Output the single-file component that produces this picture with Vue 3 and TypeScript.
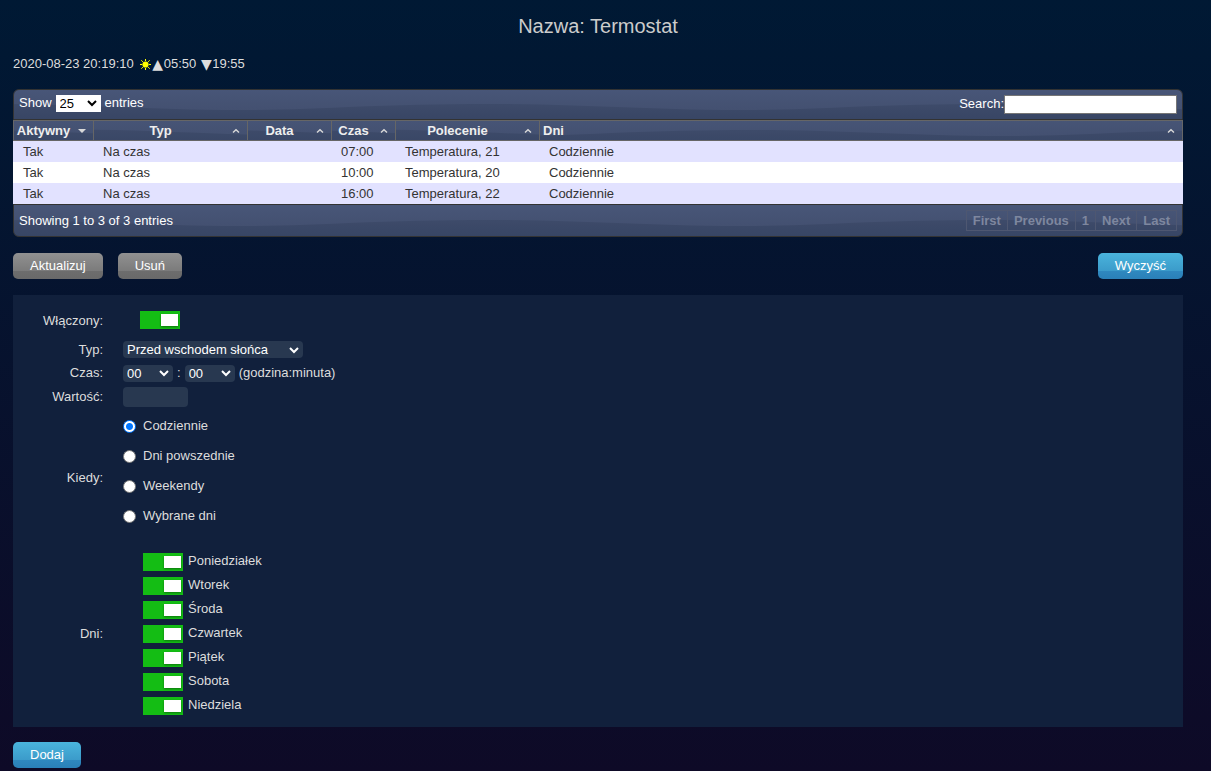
<script setup lang="ts">
import { ref } from 'vue'

interface Timer {
  active: string
  type: string
  date: string
  time: string
  command: string
  days: string
}

const columns = [
  { key: 'active', label: 'Aktywny' },
  { key: 'type', label: 'Typ' },
  { key: 'date', label: 'Data' },
  { key: 'time', label: 'Czas' },
  { key: 'command', label: 'Polecenie' },
  { key: 'days', label: 'Dni' },
]

const timers: Timer[] = [
  { active: 'Tak', type: 'Na czas', date: '', time: '07:00', command: 'Temperatura, 21', days: 'Codziennie' },
  { active: 'Tak', type: 'Na czas', date: '', time: '10:00', command: 'Temperatura, 20', days: 'Codziennie' },
  { active: 'Tak', type: 'Na czas', date: '', time: '16:00', command: 'Temperatura, 22', days: 'Codziennie' },
]

const pages = ['First', 'Previous', '1', 'Next', 'Last']
const repeatModes = ['Codziennie', 'Dni powszednie', 'Weekendy', 'Wybrane dni']
const weekdays = ['Poniedziałek', 'Wtorek', 'Środa', 'Czwartek', 'Piątek', 'Sobota', 'Niedziela']

const pageSize = ref('25')
const search = ref('')
const enabled = ref(true)
const hour = ref('00')
const minute = ref('00')
const value = ref('')
const repeat = ref('Codziennie')
const chosenDays = ref<string[]>([...weekdays])
</script>

<template>
  <main class="page">
    <h1 class="title">Nazwa: Termostat</h1>

    <p class="clock">
      <span>2020-08-23 20:19:10</span>
      <svg class="sun" viewBox="0 0 11 11" aria-hidden="true">
        <circle cx="5.5" cy="5.5" r="3.1" fill="#ff0" />
        <path
          d="M5.5 0v2M5.5 9v2M0 5.5h2M9 5.5h2M1.3 1.3l1.6 1.6M8.1 8.1l1.6 1.6M9.7 1.3L8.1 2.9M2.9 8.1L1.3 9.7"
          stroke="#ff0"
          stroke-width="1"
        />
      </svg>
      <span class="sun-time"><span class="tri">▲</span>05:50</span>
      <span class="sun-time"><span class="tri">▼</span>19:55</span>
    </p>

    <section class="grid-box">
      <div class="bar bar-top wave">
        <label class="length">
          Show
          <select v-model="pageSize" class="size-select">
            <option>10</option>
            <option>25</option>
            <option>50</option>
          </select>
          entries
        </label>
        <label class="filter">Search:<input v-model="search" type="search" class="search" /></label>
      </div>

      <table class="timers">
        <colgroup>
          <col v-for="c in columns" :key="c.key" :class="'w-' + c.key" />
        </colgroup>
        <thead>
          <tr>
            <th v-for="(c, i) in columns" :key="c.key" class="wave" :class="{ last: c.key === 'days' }">
              <div class="head">
                <span class="head-label">{{ c.label }}</span>
                <svg v-if="i === 0" class="sort" viewBox="0 0 8 8" aria-hidden="true">
                  <path d="M0 2h8L4 6z" fill="#d9d9d9" />
                </svg>
                <svg v-else class="sort" viewBox="0 0 8 8" aria-hidden="true">
                  <path d="M1 5.5L4 2.7L7 5.5" fill="none" stroke="#d9d9d9" stroke-width="1.4" />
                </svg>
              </div>
            </th>
          </tr>
        </thead>
        <tbody>
          <tr v-for="t in timers" :key="t.time">
            <td>{{ t.active }}</td>
            <td>{{ t.type }}</td>
            <td>{{ t.date }}</td>
            <td>{{ t.time }}</td>
            <td>{{ t.command }}</td>
            <td>{{ t.days }}</td>
          </tr>
        </tbody>
      </table>

      <div class="bar bar-bottom wave">
        <span>Showing 1 to 3 of 3 entries</span>
        <nav class="pager">
          <button v-for="p in pages" :key="p" type="button" class="page-btn">{{ p }}</button>
        </nav>
      </div>
    </section>

    <div class="actions">
      <button type="button" class="btn gray">Aktualizuj</button>
      <button type="button" class="btn gray">Usuń</button>
      <button type="button" class="btn blue push">Wyczyść</button>
    </div>

    <form class="panel" @submit.prevent>
      <div class="row row-enabled">
        <label class="name" for="enabled">Włączony:</label>
        <div class="field"><input id="enabled" v-model="enabled" type="checkbox" class="toggle" /></div>
      </div>
      <div class="row row-type">
        <label class="name" for="kind">Typ:</label>
        <div class="field">
          <select id="kind" class="dark-select kind">
            <option>Przed wschodem słońca</option>
          </select>
        </div>
      </div>
      <div class="row row-time">
        <label class="name" for="hour">Czas:</label>
        <div class="field time">
          <select id="hour" v-model="hour" class="dark-select short"><option>00</option></select>
          <span>:</span>
          <select v-model="minute" class="dark-select short" aria-label="minuta"><option>00</option></select>
          <span>(godzina:minuta)</span>
        </div>
      </div>
      <div class="row row-value">
        <label class="name" for="value">Wartość:</label>
        <div class="field"><input id="value" v-model="value" type="text" class="value" /></div>
      </div>
      <div class="row row-when">
        <span class="name">Kiedy:</span>
        <div class="field radios">
          <label v-for="m in repeatModes" :key="m" class="radio-line">
            <input v-model="repeat" type="radio" name="repeat" :value="m" class="radio" />
            <span>{{ m }}</span>
          </label>
        </div>
      </div>
      <div class="row row-days">
        <span class="name">Dni:</span>
        <div class="field days">
          <label v-for="d in weekdays" :key="d" class="day-line">
            <input v-model="chosenDays" type="checkbox" :value="d" class="toggle" />
            <span class="caption">{{ d }}</span>
          </label>
        </div>
      </div>
    </form>

    <button type="button" class="btn blue">Dodaj</button>
  </main>
</template>

<style>
html {
  min-height: 100%;
  background: linear-gradient(#001934, #0e0a27);
}
</style>

<style scoped>
.page {
  padding: 12px 28px 3px 13px;
  font: 13px/20px "Liberation Sans", Arial, sans-serif;
  color: #ddd;
}

.page * {
  box-sizing: border-box;
}

input,
select,
button {
  margin: 0;
  font: inherit;
}

.title {
  margin: 0;
  font-size: 20px;
  line-height: 28px;
  font-weight: 400;
  text-align: center;
  color: #ccc;
}

.clock {
  display: flex;
  align-items: center;
  margin: 14px 0 15px;
}

.sun {
  width: 11px;
  height: 11px;
  margin: 0 1px 0 6px;
}

.sun-time {
  display: flex;
  margin-right: 4px;
}

.tri {
  width: 12px;
  font-family: "DejaVu Sans", sans-serif;
  font-size: 14px;
  text-align: center;
}

.wave {
  background-color: #3a4867;
  background-image: url("data:image/svg+xml,%3Csvg xmlns='http://www.w3.org/2000/svg' width='500' height='100'%3E%3Cdefs%3E%3ClinearGradient id='a' x1='0' y1='34' x2='0' y2='56' gradientUnits='userSpaceOnUse'%3E%3Cstop stop-color='%23485678'/%3E%3Cstop offset='1' stop-color='%23435070'/%3E%3C/linearGradient%3E%3ClinearGradient id='b' x1='0' y1='48' x2='0' y2='66' gradientUnits='userSpaceOnUse'%3E%3Cstop stop-color='%233e4b6a'/%3E%3Cstop offset='1' stop-color='%23374564'/%3E%3C/linearGradient%3E%3C/defs%3E%3Cpath fill='url(%23b)' d='M0 0h500v100H0z'/%3E%3Cpath fill='url(%23a)' d='M0 0H500V52C460 54 430 55 392 55C300 55 240 49 142 49C90 49 50 50 0 52z'/%3E%3C/svg%3E");
  background-position: 50% 50%;
}

.bar {
  display: flex;
  justify-content: space-between;
  border: 1px solid #333;
  color: #fff;
}

.bar-top {
  height: 31px;
  padding: 5px;
  border-radius: 6px 6px 0 0;
}

.bar-bottom {
  height: 33px;
  padding: 5px;
  align-items: center;
  border-radius: 0 0 6px 6px;
}

.length {
  display: flex;
  align-items: center;
  gap: 4px;
  height: 16px;
}

.size-select {
  width: 45px;
  height: 17px;
  padding: 0 4px;
  border: 0;
  border-radius: 0;
  appearance: none;
  color: #000;
  background: #fff url("data:image/svg+xml,%3Csvg xmlns='http://www.w3.org/2000/svg' width='10' height='8'%3E%3Cpath d='M1 2l4 4l4-4' fill='none' stroke='%23000' stroke-width='2'/%3E%3C/svg%3E") no-repeat right 4px center;
  line-height: 17px;
}

.filter {
  display: flex;
  align-items: center;
  height: 18px;
}

.search {
  width: 173px;
  height: 19px;
  margin-top: 1px;
  padding: 1px 2px;
  border: 1px solid #767676;
  border-radius: 0;
  background: #fff;
  color: #000;
}

.timers {
  width: 100%;
  table-layout: fixed;
  border-collapse: separate;
  border-spacing: 0;
}

.w-active { width: 81px; }
.w-type { width: 154px; }
.w-date { width: 84px; }
.w-time { width: 64px; }
.w-command { width: 144px; }

th {
  height: 21px;
  padding: 0;
  border: solid #666;
  border-width: 1px 1px 1px 0;
  font-weight: 700;
  color: #eee;
}

th:first-child {
  border-left-width: 1px;
}

.head {
  display: flex;
  align-items: center;
  height: 19px;
  padding-right: 7px;
}

.head-label {
  flex: 1;
  text-align: center;
  margin-right: 5px;
}

.last .head-label {
  padding-left: 3px;
  text-align: left;
}

.sort {
  width: 8px;
  height: 8px;
}

td {
  height: 21px;
  padding: 0 9px;
  line-height: 21px;
  color: #333;
  background: #fff;
}

td:first-child {
  padding-left: 10px;
}

tbody tr:nth-child(odd) td {
  background: #e2e2ff;
}

.pager {
  display: flex;
}

.page-btn {
  height: 21px;
  margin-left: -1px;
  padding: 0 6px;
  border: 1px solid #4e5771;
  background: none;
  font-weight: 700;
  line-height: 19px;
  color: #7e879f;
}

.actions {
  display: flex;
  gap: 15px;
  margin: 16px 0;
}

.push {
  margin-left: auto;
}

.btn {
  height: 26px;
  padding: 0 17px;
  border: 0;
  border-radius: 5px;
  line-height: 26px;
  color: #fff;
}

.gray {
  background: linear-gradient(#919191, #7b7b7b 69%, #6d6d6d 70%, #696969);
}

.blue {
  background: linear-gradient(#4ab4dc, #3b9bca 69%, #2f88bf 70%, #2a80b8);
}

.panel {
  margin-bottom: 15px;
  padding: 11px 0 4px;
  background: #11203c;
}

.row {
  display: grid;
  grid-template-columns: 90px 1fr;
  column-gap: 20px;
  align-items: center;
}

.name {
  text-align: right;
}

.field {
  display: flex;
  align-items: center;
}

.row-enabled { height: 30px; }
.row-enabled .field { padding: 0 0 2px 17px; }
.row-type { height: 27px; }
.row-time { height: 20px; }
.row-value { height: 28px; }
.row-when { height: 134px; }
.row-days { height: 178px; }

.toggle {
  display: block;
  width: 40px;
  height: 18px;
  padding: 3px 2px;
  appearance: none;
  background: #999;
}

.toggle::before {
  content: "";
  display: block;
  width: 17px;
  height: 12px;
  background: #fff;
  box-shadow: 0 1px 2px rgba(0, 0, 0, 0.4);
}

.toggle:checked {
  background: #14bd14;
}

.toggle:checked::before {
  margin-left: auto;
}

.dark-select {
  height: 17px;
  padding: 0 4px;
  border: 0;
  border-radius: 4px;
  appearance: none;
  color: #fff;
  background: #283850 url("data:image/svg+xml,%3Csvg xmlns='http://www.w3.org/2000/svg' width='10' height='8'%3E%3Cpath d='M1 2l4 4l4-4' fill='none' stroke='%23fff' stroke-width='2'/%3E%3C/svg%3E") no-repeat right 4px center;
  line-height: 17px;
}

.kind {
  width: 180px;
}

.short {
  width: 50px;
}

.time {
  gap: 4px;
}

.value {
  width: 65px;
  height: 20px;
  padding: 1px 4px;
  border: 0;
  border-radius: 4px;
  background: #283850;
  color: #fff;
}

.radios {
  display: block;
  align-self: start;
}

.radio-line {
  display: flex;
  align-items: center;
  height: 30px;
}

.radio {
  width: 13px;
  height: 13px;
  margin-right: 7px;
  border: 1px solid #767676;
  border-radius: 50%;
  appearance: none;
  background: #fff;
}

.radio:checked {
  border-color: #0075ff;
  background: radial-gradient(circle, #0075ff 3px, #fff 4px);
}

.caption {
  padding-bottom: 2px;
}

.days {
  display: block;
  padding-left: 20px;
}

.day-line {
  display: flex;
  align-items: center;
  gap: 5px;
  height: 24px;
}

.panel + .btn {
  display: block;
}
</style>
